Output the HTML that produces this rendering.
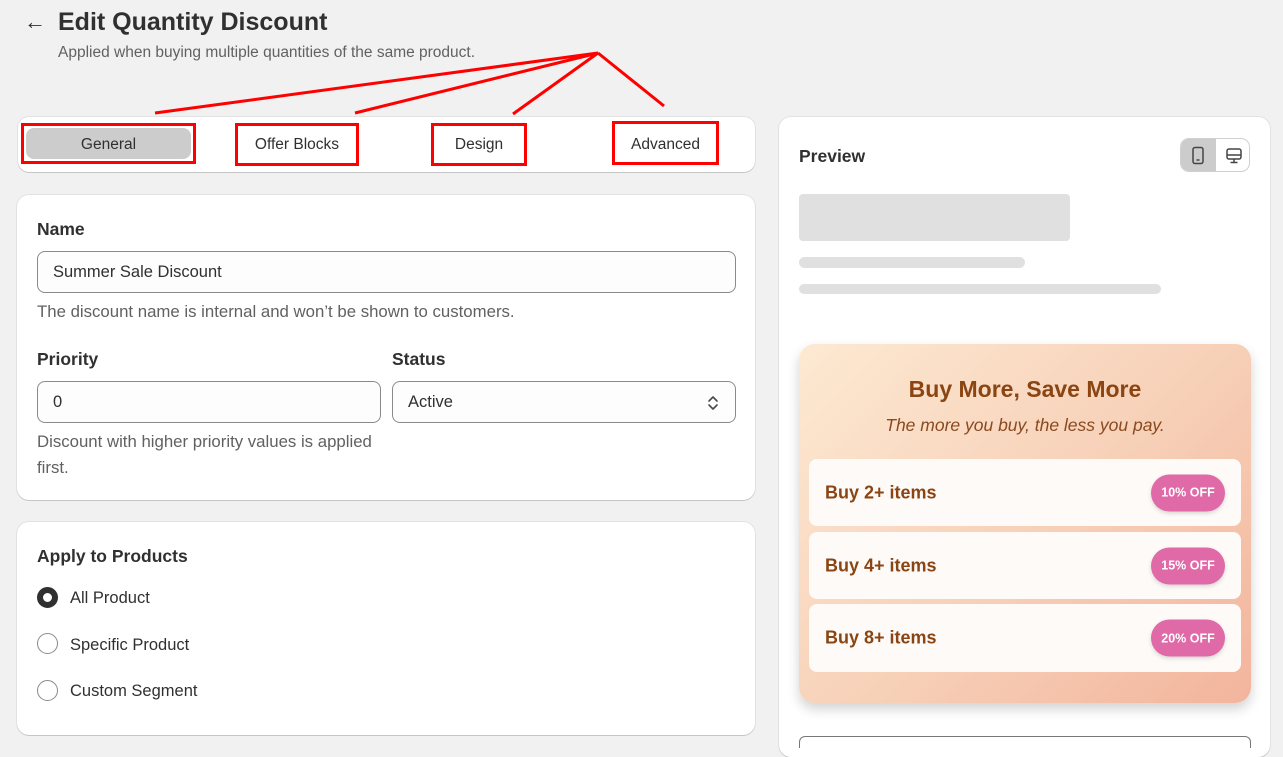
<!DOCTYPE html>
<html><head><style>
*{box-sizing:border-box;margin:0;padding:0}
body{width:1283px;height:741px;overflow:hidden;background:#f1f1f1;font-family:"Liberation Sans",sans-serif;color:#303030;position:relative}
.abs{position:absolute}
.card{position:absolute;background:#fff;border-radius:12px;box-shadow:0 1px 0 rgba(0,0,0,.12),0 0 0 1px rgba(0,0,0,.06)}
.lbl{position:absolute;font-weight:bold;font-size:17.5px;color:#303030}
.inp{position:absolute;border:1px solid #8a8a8a;border-radius:8px;background:#fdfdfd;font-size:16.5px;padding:0 15px;display:flex;align-items:center;color:#303030}
.help{position:absolute;font-size:16.8px;color:#616161;line-height:26px}
.tab{position:absolute;font-size:15.5px;color:#303030;text-align:center}
.rb{position:absolute;width:21px;height:21px;border-radius:50%;border:1.5px solid #8a8a8a;background:#fff}
.rt{position:absolute;font-size:16.5px;color:#303030}
.row{position:absolute;left:10px;width:432px;background:#fefaf8;border-radius:8px}
.row span{position:absolute;left:16px;top:50%;transform:translateY(-50%);font-weight:bold;font-size:18px;color:#8a4513}
.row b{position:absolute;right:16px;top:50%;transform:translateY(-50%);width:74px;height:37px;border-radius:19px;background:#e06aa8;color:#fff;font-size:12.5px;display:flex;align-items:center;justify-content:center;box-shadow:0 2px 4px rgba(0,0,0,.15)}
.sk{position:absolute;background:#e0e0e0}
</style></head><body>
<div class="abs" style="left:24px;top:9px;font-size:22px;color:#303030">&#8592;</div>
<div class="abs" style="left:58px;top:8px;font-size:25px;font-weight:bold;color:#303030">Edit Quantity Discount</div>
<div class="abs" style="left:58px;top:44px;font-size:15.5px;color:#616161">Applied when buying multiple quantities of the same product.</div>

<div class="card" style="left:18px;top:117px;width:737px;height:55px;border-radius:11px"></div>
<div class="abs" style="left:26px;top:128px;width:165px;height:31px;background:#cccccc;border-radius:8px"></div>
<div class="tab" style="left:26px;top:136px;width:165px">General</div>
<div class="tab" style="left:236px;top:136px;width:122px">Offer Blocks</div>
<div class="tab" style="left:432px;top:136px;width:94px">Design</div>
<div class="tab" style="left:613px;top:136px;width:105px">Advanced</div>

<div class="card" style="left:17px;top:195px;width:738px;height:305px"></div>
<div class="lbl" style="left:37px;top:219px">Name</div>
<div class="inp" style="left:37px;top:251px;width:699px;height:42px">Summer Sale Discount</div>
<div class="help" style="left:37px;top:299px">The discount name is internal and won’t be shown to customers.</div>
<div class="lbl" style="left:37px;top:349px">Priority</div>
<div class="lbl" style="left:392px;top:349px">Status</div>
<div class="inp" style="left:37px;top:381px;width:344px;height:42px">0</div>
<div class="inp" style="left:392px;top:381px;width:344px;height:42px">Active
<svg class="abs" style="right:15px;top:12px" width="14" height="18" viewBox="0 0 14 18"><path d="M3 7l4-4 4 4M3 11l4 4 4-4" fill="none" stroke="#4a4a4a" stroke-width="1.6" stroke-linecap="round" stroke-linejoin="round"/></svg></div>
<div class="help" style="left:37px;top:429px;width:350px">Discount with higher priority values is applied first.</div>

<div class="card" style="left:17px;top:522px;width:738px;height:213px"></div>
<div class="lbl" style="left:37px;top:546px">Apply to Products</div>
<div class="rb" style="left:37px;top:587px;border:6px solid #303030"></div>
<div class="rt" style="left:70px;top:589px">All Product</div>
<div class="rb" style="left:37px;top:633px"></div>
<div class="rt" style="left:70px;top:636px">Specific Product</div>
<div class="rb" style="left:37px;top:680px"></div>
<div class="rt" style="left:70px;top:682px">Custom Segment</div>

<div class="card" style="left:779px;top:117px;width:491px;height:640px"></div>
<div class="lbl" style="left:799px;top:146px">Preview</div>
<div class="abs" style="left:1180px;top:138px;width:70px;height:34px;border:1px solid #d0d0d0;border-radius:9px;overflow:hidden;background:#fff">
<div class="abs" style="left:0;top:0;width:35px;height:34px;background:#cccccc"></div>
<svg class="abs" style="left:10px;top:7px" width="14" height="20" viewBox="0 0 14 20"><rect x="2" y="1.5" width="10" height="16" rx="2" fill="none" stroke="#444" stroke-width="1.5"/><path d="M5.5 14h3" stroke="#444" stroke-width="1.5"/></svg>
<svg class="abs" style="left:44px;top:8px" width="18" height="18" viewBox="0 0 18 18"><rect x="2" y="2" width="14" height="10" rx="2" fill="none" stroke="#444" stroke-width="1.5"/><path d="M2 8h14M9 12v3M5.5 15.5h7" stroke="#444" stroke-width="1.5"/></svg>
</div>
<div class="sk" style="left:799px;top:194px;width:271px;height:47px;border-radius:4px"></div>
<div class="sk" style="left:799px;top:257px;width:226px;height:11px;border-radius:6px"></div>
<div class="sk" style="left:799px;top:284px;width:362px;height:10px;border-radius:5px"></div>

<div class="abs" style="left:799px;top:344px;width:452px;height:359px;border-radius:16px;background:linear-gradient(135deg,#fde9d2 0%,#f7cfb7 55%,#f3b49c 100%);box-shadow:0 6px 12px rgba(0,0,0,.18)">
<div class="abs" style="left:0;top:32px;width:452px;text-align:center;font-weight:bold;font-size:23px;color:#8a4513">Buy More, Save More</div>
<div class="abs" style="left:0;top:71px;width:452px;text-align:center;font-style:italic;font-size:17.5px;color:#8a4a20">The more you buy, the less you pay.</div>
<div class="row" style="top:115px;height:67px"><span>Buy 2+ items</span><b>10% OFF</b></div>
<div class="row" style="top:188px;height:67px"><span>Buy 4+ items</span><b>15% OFF</b></div>
<div class="row" style="top:260px;height:68px"><span>Buy 8+ items</span><b>20% OFF</b></div>
</div>
<div class="abs" style="left:799px;top:736px;width:452px;height:12px;border:1px solid #777;border-bottom:none;border-radius:6px 6px 0 0"></div>

<svg class="abs" style="left:0;top:0" width="1283" height="741">
<g stroke="#ff0000" stroke-width="3" fill="none">
<path d="M598 53L155 113M598 53L355 113M598 53L513 114M598 53L664 106"/>
<rect x="22.5" y="124.5" width="172" height="38"/>
<rect x="236.5" y="124.5" width="121" height="40"/>
<rect x="432.5" y="124.5" width="93" height="40"/>
<rect x="613.5" y="122.5" width="104" height="41"/>
</g></svg>
</body></html>
